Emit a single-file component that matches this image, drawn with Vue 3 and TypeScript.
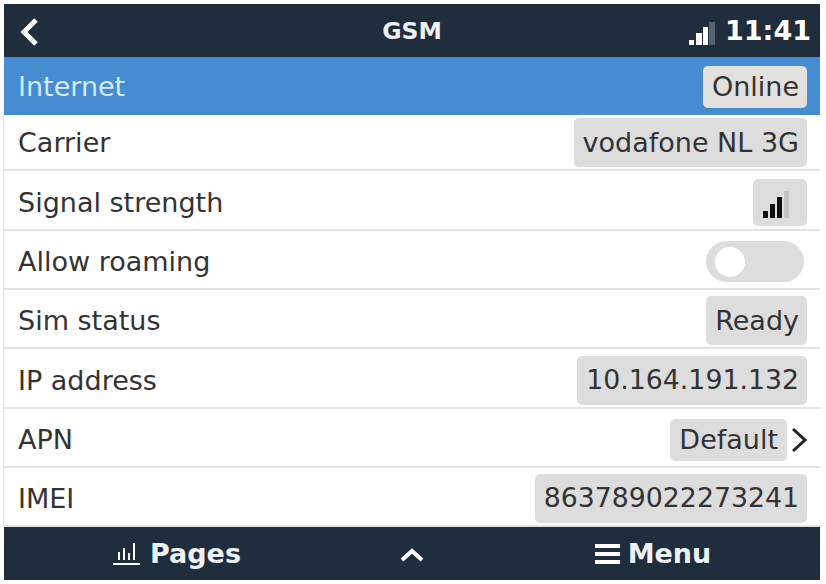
<script setup lang="ts">
interface Row {
  label: string
  value?: string
  kind?: 'signal' | 'toggle' | 'link'
  height: number
}
const rows: Row[] = [
  { label: 'Carrier', value: 'vodafone NL 3G', height: 56 },
  { label: 'Signal strength', kind: 'signal', height: 60 },
  { label: 'Allow roaming', kind: 'toggle', height: 59 },
  { label: 'Sim status', value: 'Ready', height: 59 },
  { label: 'IP address', value: '10.164.191.132', height: 60 },
  { label: 'APN', value: 'Default', kind: 'link', height: 59 },
  { label: 'IMEI', value: '863789022273241', height: 59 },
]
const isNumeric = (v?: string): boolean => !!v && /^\d/.test(v)
</script>

<template>
  <div class="screen">
    <header class="top">
      <svg class="back" width="24" height="32" viewBox="0 0 24 32">
        <path d="M19 4 L7 16 L19 28" fill="none" stroke="#fff" stroke-width="5" />
      </svg>
      <span class="title">GSM</span>
      <div class="status">
        <svg class="status-icon" width="26" height="23" viewBox="0 0 26 23">
          <rect x="0" y="18" width="5" height="5" fill="#fff" />
          <rect x="7" y="11" width="6" height="12" fill="#fff" />
          <rect x="14" y="5" width="5" height="18" fill="#fff" />
          <rect x="20" y="0" width="6" height="23" fill="#56636f" />
        </svg>
        <span class="time">11:41</span>
      </div>
    </header>

    <div class="row active">
      <span>Internet</span>
      <span class="pill online">Online</span>
    </div>

    <div class="list">
      <div
        v-for="(row, i) in rows"
        :key="row.label"
        class="row"
        :class="{ first: i === 0 }"
        :style="{ height: row.height + 'px' }"
      >
        <span>{{ row.label }}</span>
        <span v-if="row.kind === 'signal'" class="pill signal">
          <svg width="26" height="27" viewBox="0 0 26 27">
            <rect x="0" y="20" width="5" height="7" fill="#111" />
            <rect x="7" y="13" width="5" height="14" fill="#111" />
            <rect x="14" y="6" width="5" height="21" fill="#111" />
            <rect x="21" y="0" width="5" height="27" fill="#c4c4c4" />
          </svg>
        </span>
        <span v-else-if="row.kind === 'toggle'" class="toggle"><i></i></span>
        <span v-else-if="row.kind === 'link'" class="link">
          <span class="pill short">{{ row.value }}</span>
          <svg width="19" height="28" viewBox="0 0 19 28">
            <path d="M4 3 L16 14 L4 25" fill="none" stroke="#222" stroke-width="3" />
          </svg>
        </span>
        <span v-else class="pill" :class="{ num: isNumeric(row.value) }">{{ row.value }}</span>
      </div>
    </div>

    <footer class="bottom">
      <div class="foot-item pages">
        <svg width="27" height="22" viewBox="0 0 27 22">
          <path d="M6 9v8M11 5v12M16 10v7M21 0v17" stroke="#fff" stroke-width="2" />
          <path d="M0 21h27" stroke="#fff" stroke-width="2" />
        </svg>
        <span>Pages</span>
      </div>
      <svg class="chev" width="24" height="16" viewBox="0 0 24 16">
        <path d="M2 14 L12 5 L22 14" fill="none" stroke="#fff" stroke-width="4" />
      </svg>
      <div class="foot-item menu">
        <svg width="25" height="20" viewBox="0 0 25 20">
          <path d="M0 2h25M0 10h25M0 18h25" stroke="#fff" stroke-width="4" />
        </svg>
        <span>Menu</span>
      </div>
    </footer>
  </div>
</template>

<style>
html, body { margin: 0; background: #fff; }
</style>

<style scoped>
.screen {
  width: 816px;
  margin: 4px 0 0 4px;
  display: flex;
  flex-direction: column;
  font-family: "DejaVu Sans", sans-serif;
  font-size: 27px;
  color: #333;
  background: #fff;
}
.top {
  height: 53px;
  box-sizing: border-box;
  background: #1f2d3d;
  display: flex;
  align-items: center;
  justify-content: space-between;
  position: relative;
  padding: 0 9px 0 13px;
  color: #fff;
  font-weight: 700;
}
.back { margin-top: 2px; }
.title {
  position: absolute;
  left: 0;
  right: 0;
  text-align: center;
  font-size: 23.5px;
  color: #eef1f3;
  pointer-events: none;
}
.status {
  display: flex;
  align-items: center;
  gap: 10px;
}
.status-icon { margin-top: 6px; }
.list { box-shadow: -1px 0 0 #e4e4e4; }
.row {
  box-sizing: border-box;
  display: flex;
  align-items: center;
  justify-content: space-between;
  padding: 4px 13px 0 14px;
  border-bottom: 2px solid #e4e4e4;
}
.row.first { padding-top: 0; }
.active {
  height: 58px;
  padding-top: 0;
  background: #458cd0;
  color: #d5eafa;
  border-bottom: 0;
}
.pill {
  display: flex;
  align-items: center;
  height: 49px;
  padding: 0 8px 0 9px;
  border-radius: 5px;
  background: #dddddd;
  line-height: 1;
}
.num { font-size: 26.75px; }
.online {
  height: 42px;
  margin-top: 2px;
  padding-bottom: 2px;
  box-sizing: border-box;
  color: #333;
  background: #e3e1de;
}
.signal {
  width: 54px;
  height: 47px;
  box-sizing: border-box;
  padding: 4px 0 0 10px;
}
.short { height: 42px; padding-right: 9px; }
.link {
  display: flex;
  align-items: center;
  gap: 2px;
}
.link svg { margin-right: -1px; }
.toggle {
  width: 98px;
  height: 41px;
  border-radius: 21px;
  background: #dddddd;
  display: flex;
  align-items: center;
  box-sizing: border-box;
  padding-left: 9px;
  margin-right: 3px;
}
.toggle i {
  width: 30px;
  height: 30px;
  border-radius: 50%;
  background: #fff;
}
.bottom {
  height: 53px;
  background: #1f2d3d;
  color: #eef1f3;
  display: grid;
  grid-template-columns: 346px auto 1fr;
  align-items: center;
  font-weight: 700;
  font-size: 27px;
}
.foot-item {
  display: flex;
  align-items: center;
  justify-content: center;
}
.pages { gap: 10px; }
.menu { gap: 8px; }
.chev { margin: 0 62px 0 50px; }
</style>
